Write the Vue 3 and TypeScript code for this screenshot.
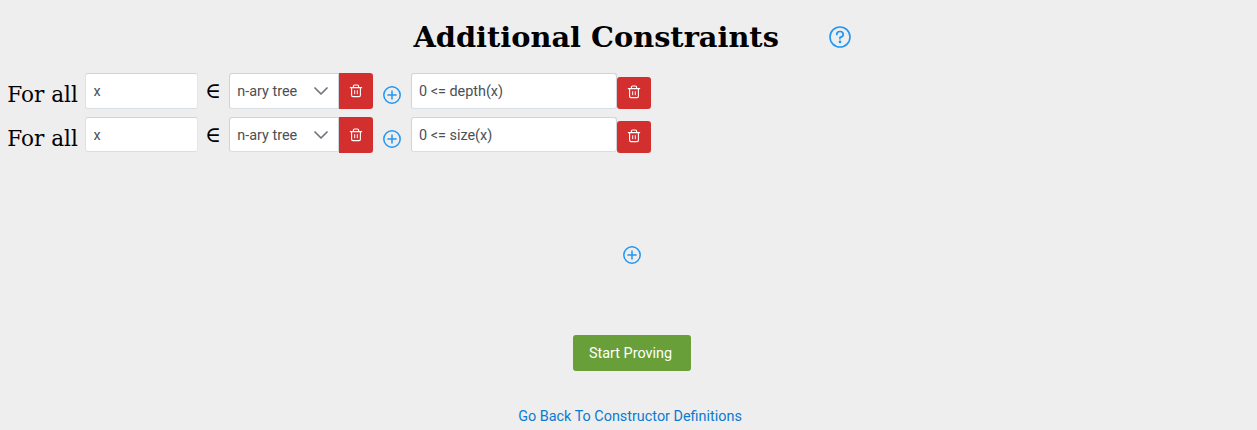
<script setup lang="ts">
import { ref } from 'vue'

interface Constraint {
  id: number
  variable: string
  type: string
  expression: string
}

const types = ['n-ary tree']
const constraints = ref<Constraint[]>([
  { id: 1, variable: 'x', type: 'n-ary tree', expression: '0 <= depth(x)' },
  { id: 2, variable: 'x', type: 'n-ary tree', expression: '0 <= size(x)' },
])

function remove(id: number) {
  constraints.value = constraints.value.filter((c) => c.id !== id)
}

function add() {
  constraints.value.push({ id: Date.now(), variable: '', type: types[0], expression: '' })
}
</script>

<template>
  <main class="page">
    <svg class="defs" width="0" height="0" aria-hidden="true">
      <symbol id="trash" viewBox="0 0 14 14">
        <g fill="none" stroke="currentColor" stroke-linecap="round" stroke-linejoin="round">
          <path stroke-width="1.1" d="M1.3 3.6h11.4M2.6 3.6v7.7c0 .9.5 1.3 1.3 1.3h6.2c.8 0 1.3-.4 1.3-1.3V3.6M4.4 3.6V2.1c0-.7.4-1.1 1.1-1.1h3c.7 0 1.1.4 1.1 1.1v1.5" />
          <path stroke-width="1" d="M5.7 6.6v3.2M8.3 6.6v3.2" />
        </g>
      </symbol>
      <symbol id="plus" viewBox="0 0 18 18">
        <g fill="none" stroke="currentColor" stroke-width="1.5" stroke-linecap="round">
          <circle cx="9" cy="9" r="8.2" />
          <path d="M9 4.9v8.2M4.9 9h8.2" />
        </g>
      </symbol>
    </svg>

    <header class="header">
      <h1 class="title">Additional Constraints</h1>
      <button class="icon-button" aria-label="Help">
        <svg class="help" viewBox="0 0 22 22">
          <circle cx="11" cy="11" r="10" fill="none" stroke="currentColor" stroke-width="1.6" />
          <path d="M7.8 8.4C7.8 6.7 9.2 5.5 11 5.5s3.2 1.2 3.2 2.9c0 1.5-1.2 2.6-3.2 2.9v1.4" fill="none" stroke="currentColor" stroke-width="1.7" stroke-linecap="round" stroke-linejoin="round" />
          <circle cx="11" cy="15.9" r="1.3" fill="currentColor" />
        </svg>
      </button>
    </header>

    <section class="rows">
      <div v-for="c in constraints" :key="c.id" class="row">
        <span class="forall">For all</span>
        <input v-model="c.variable" class="field variable" type="text" />
        <span class="member">∈</span>
        <button class="field select">
          <span class="select-label">{{ c.type }}</span>
          <svg class="chevron" viewBox="0 0 14 14">
            <path d="M1 4l6 6 6-6" fill="none" stroke="currentColor" stroke-width="1.7" stroke-linecap="round" stroke-linejoin="round" />
          </svg>
        </button>
        <button class="danger joined" aria-label="Remove variable" @click="remove(c.id)">
          <svg class="trash"><use href="#trash" /></svg>
        </button>
        <button class="icon-button add-variable" aria-label="Add variable">
          <svg class="plus"><use href="#plus" /></svg>
        </button>
        <input v-model="c.expression" class="field expression" type="text" />
        <button class="danger short" aria-label="Remove constraint" @click="remove(c.id)">
          <svg class="trash"><use href="#trash" /></svg>
        </button>
      </div>
    </section>

    <footer class="footer">
      <button class="icon-button" aria-label="Add constraint" @click="add">
        <svg class="plus"><use href="#plus" /></svg>
      </button>
      <button class="start">Start Proving</button>
      <a class="back" href="#">Go Back To Constructor Definitions</a>
    </footer>
  </main>
</template>

<style>
html,
body {
  background: #eeeeee;
  overflow: hidden;
}
</style>

<style scoped>
.page {
  box-sizing: border-box;
  width: 1257px;
  height: 430px;
  overflow: hidden;
  background: #eeeeee;
  color: #000;
  font-family: 'DejaVu Serif', serif;
}

.page * {
  box-sizing: border-box;
}

.defs {
  display: block;
}

button {
  border: 0;
  padding: 0;
  margin: 0;
  cursor: pointer;
}

.header {
  display: flex;
  align-items: center;
  height: 73px;
  padding-left: 413.5px;
}

.title {
  width: 415px;
  margin: 0;
  font-size: 28.8px;
  line-height: 74px;
  font-weight: 700;
  white-space: nowrap;
}

.icon-button {
  display: flex;
  background: none;
  color: #2196f3;
}

.help {
  width: 22px;
  height: 22px;
  margin-top: 1px;
}

.plus {
  width: 18px;
  height: 18px;
}

.rows {
  display: flex;
  flex-direction: column;
  gap: 8.4px;
  height: 173px;
  padding-top: 0.2px;
  padding-left: 7.2px;
}

.row {
  display: flex;
  align-items: flex-start;
  height: 35.4px;
}

.forall {
  width: 78.2px;
  padding-top: 4px;
  font-size: 21.6px;
  line-height: 35px;
  white-space: nowrap;
}

.field {
  height: 35.4px;
  padding: 1px 7.2px 0;
  border: 1px solid #ced4da;
  border-bottom-color: #d9dee3;
  border-radius: 3px;
  background: #fff;
  color: #495057;
  font: 14.4px/33px Roboto, sans-serif;
  outline: none;
}

.variable {
  width: 113px;
  border-left-color: #dee2e6;
  border-right-color: #e3e7eb;
}

.member {
  width: 30.8px;
  padding-right: 1.2px;
  font-size: 21.6px;
  line-height: 36px;
  text-align: center;
}

.select {
  display: flex;
  align-items: center;
  justify-content: space-between;
  width: 110px;
  padding-right: 10px;
  border-radius: 3px 0 0 3px;
}

.select-label {
  padding-top: 1px;
}

.chevron {
  width: 14px;
  height: 14px;
  color: #6c757d;
}

.danger {
  display: flex;
  align-items: center;
  justify-content: center;
  width: 34.2px;
  background: #d32f2f;
  color: #fff;
}

.joined {
  height: 35.6px;
  border-radius: 0 3px 3px 0;
}

.short {
  height: 31.6px;
  margin-top: 4px;
  padding-bottom: 1px;
  border-radius: 3px;
}

.trash {
  width: 14px;
  height: 14px;
}

.add-variable {
  margin: 13px 9.5px 0 10px;
}

.expression {
  width: 206px;
}

.footer {
  display: flex;
  flex-direction: column;
  align-items: center;
  padding-left: 7px;
}

.start {
  width: 118px;
  height: 35.5px;
  margin-top: 71px;
  padding-top: 1px;
  padding-right: 3px;
  border-radius: 3px;
  background: #689f38;
  color: #fff;
  font: 14.4px/36px Roboto, sans-serif;
}

.back {
  margin-top: 35.5px;
  padding-right: 4px;
  color: #0b7ad1;
  font: 14.4px/22px Roboto, sans-serif;
  text-decoration: none;
}
</style>
